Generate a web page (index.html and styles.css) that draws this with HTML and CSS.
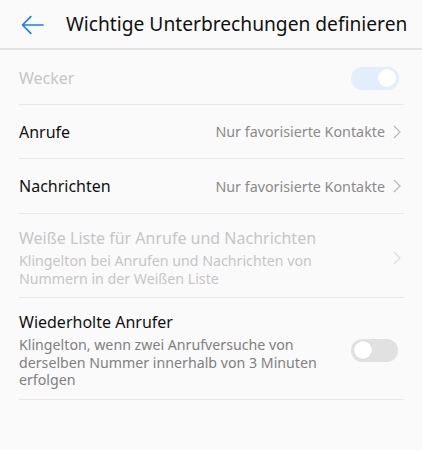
FILE: index.html
```html
<!DOCTYPE html>
<html>
<head>
<meta charset="utf-8">
<link rel="stylesheet" href="styles.css">
</head>
<body>
<div class="screen">
  <header class="header">
    <svg class="back" width="24" height="24" viewBox="0 0 24 24">
      <path d="M22 12H1.8M9.8 3.6L1.5 12L9.8 20.4" fill="none" stroke="#1a7ef7" stroke-width="1.7" stroke-linecap="round" stroke-linejoin="round"/>
    </svg>
    <h1 class="title">Wichtige Unterbrechungen definieren</h1>
  </header>
  <div class="list">
    <div class="row single first disabled">
      <div class="text"><div class="label">Wecker</div></div>
      <div class="switch on"><div class="knob"></div></div>
    </div>
    <div class="row single">
      <div class="text"><div class="label">Anrufe</div></div>
      <div class="value">Nur favorisierte Kontakte</div>
      <svg class="chev" width="8" height="14" viewBox="0 0 8 14"><path d="M1 1L7 7L1 13" fill="none" stroke="#b8b8b8" stroke-width="1.2"/></svg>
    </div>
    <div class="row single tall">
      <div class="text"><div class="label">Nachrichten</div></div>
      <div class="value">Nur favorisierte Kontakte</div>
      <svg class="chev" width="8" height="14" viewBox="0 0 8 14"><path d="M1 1L7 7L1 13" fill="none" stroke="#b8b8b8" stroke-width="1.2"/></svg>
    </div>
    <div class="row multi disabled">
      <div class="text">
        <div class="label">Weiße Liste für Anrufe und Nachrichten</div>
        <div class="sub">Klingelton bei Anrufen und Nachrichten von Nummern in der Weißen Liste</div>
      </div>
      <svg class="chev" width="8" height="14" viewBox="0 0 8 14"><path d="M1 1L7 7L1 13" fill="none" stroke="#dcdcdc" stroke-width="1.2"/></svg>
    </div>
    <div class="row multi">
      <div class="text">
        <div class="label">Wiederholte Anrufer</div>
        <div class="sub">Klingelton, wenn zwei Anrufversuche von derselben Nummer innerhalb von 3 Minuten erfolgen</div>
      </div>
      <div class="switch off"><div class="knob"></div></div>
    </div>
  </div>
</div>
</body>
</html>
```

FILE: styles.css
```css
html, body {
  margin: 0;
  padding: 0;
  background: #fafafa;
}
.screen {
  width: 422px;
  height: 450px;
  background: #fafafa;
  font-family: "Noto Sans", Roboto, sans-serif;
  overflow: hidden;
}
.header {
  height: 48px;
  display: flex;
  align-items: center;
  border-bottom: 2px solid #e2e2e2;
}
.back {
  margin-left: 21px;
  margin-right: 21px;
  margin-top: 2px;
  flex: none;
}
.title {
  margin: 0;
  font-size: 19.2px;
  font-weight: 400;
  color: #111;
  white-space: nowrap;
  line-height: 24px;
}
.list {
  margin: 0 18px 0 19px;
}
.row {
  display: flex;
  align-items: center;
  border-bottom: 1px solid #e8e8e8;
  box-sizing: border-box;
}
.row.single {
  height: 54px;
}
.row.tall {
  height: 55px;
}
.row.first {
  height: 55px;
  padding-top: 2px;
}
.row.multi {
  padding: 14px 0 10px;
}
.text {
  flex: 1;
  min-width: 0;
}
.label {
  font-size: 16px;
  color: #111;
  line-height: 20px;
}
.sub {
  font-size: 14.2px;
  color: #808080;
  line-height: 17.5px;
  margin-top: 4px;
  max-width: 322px;
}
.disabled .label, .disabled .sub {
  color: #c6c6c6;
}
.value {
  font-size: 14.3px;
  color: #8a8a8a;
  margin-right: 8px;
}
.chev {
  flex: none;
  margin-right: 3px;
}
.switch {
  width: 48px;
  height: 23px;
  border-radius: 12px;
  position: relative;
  flex: none;
  margin-right: 5px;
  box-sizing: border-box;
}
.switch.on {
  background: #e2eefc;
}
.switch.off {
  background: #e1e1e1;
  width: 47px;
  margin-right: 6px;
}
.knob {
  position: absolute;
  top: 2.5px;
  width: 18px;
  height: 18px;
  border-radius: 50%;
  background: #fff;
}
.on .knob {
  right: 3px;
}
.off .knob {
  left: 3px;
  box-shadow: 0 0 0 0.5px #d4d4d4;
}
```
